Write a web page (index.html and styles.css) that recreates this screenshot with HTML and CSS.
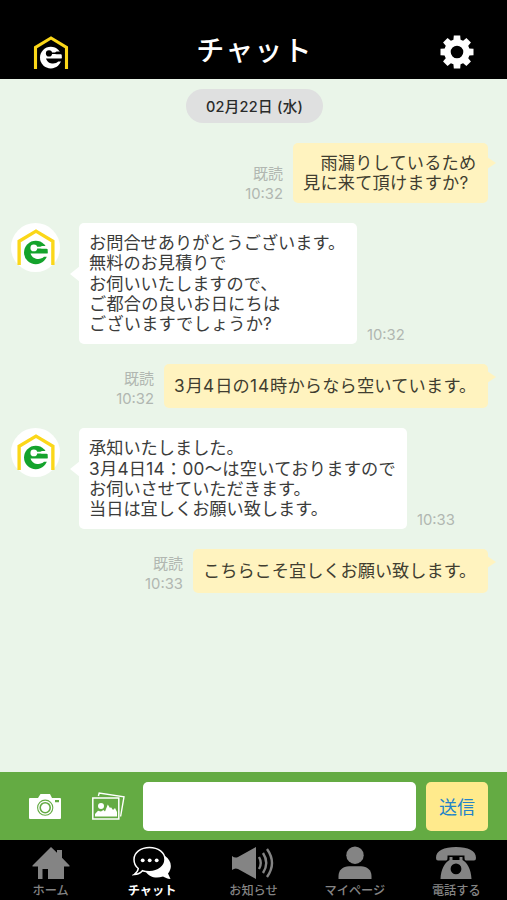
FILE: index.html
```html
<!DOCTYPE html>
<html lang="ja">
<head>
<meta charset="utf-8">
<title>チャット</title>
<link rel="stylesheet" href="styles.css">
</head>
<body>
<svg class="defs" aria-hidden="true">
  <mask id="letter-cut" maskUnits="userSpaceOnUse" x="0" y="0" width="36" height="34">
    <rect width="36" height="34" fill="#fff"/>
    <circle cx="16" cy="17.4" r="3.1" fill="#000"/>
    <path d="M16 16.4H22L23.5 15.6H31V18.2H23.5L22 18H16Z" fill="#000"/>
    <path d="M13 22.4H31V25.6H25.3C22.5 28.6 14.8 28.6 13 22.4Z" fill="#000"/>
  </mask>
  <symbol id="logo" viewBox="0 0 36 34">
    <path class="roof" d="M2.5 33V11.3L18 2L33.5 11.3V33"/>
    <g mask="url(#letter-cut)">
      <circle class="letter" cx="17.8" cy="21.6" r="10.8"/>
      <path class="letter" d="M18 18.4H28.6V22.4H18Z"/>
    </g>
  </symbol>
</svg>
<div class="app">
  <header class="header">
    <svg class="header-logo"><use href="#logo"/></svg>
    <h1 class="title">チャット</h1>
    <svg class="gear" viewBox="-17 -17 34 34">
      <g fill="#fff">
        <path fill-rule="evenodd" d="M0-12.8A12.8 12.8 0 1 0 0 12.8A12.8 12.8 0 1 0 0-12.8ZM0-6.3A6.3 6.3 0 1 1 0 6.3A6.3 6.3 0 1 1 0-6.3Z"/>
        <path id="tooth" d="M-3.6-11.5L-3.2-16.5H3.2L3.6-11.5Z"/>
        <use href="#tooth" transform="rotate(45)"/><use href="#tooth" transform="rotate(90)"/>
        <use href="#tooth" transform="rotate(135)"/><use href="#tooth" transform="rotate(180)"/>
        <use href="#tooth" transform="rotate(225)"/><use href="#tooth" transform="rotate(270)"/>
        <use href="#tooth" transform="rotate(315)"/>
      </g>
    </svg>
  </header>

  <main class="chat">
    <div class="date">02月22日 (水)</div>

    <div class="row sent">
      <div class="meta"><span class="read">既読</span><span>10:32</span></div>
      <div class="bubble w195 tail-mid"><p class="wide">　雨漏りしているため</p><p class="wide">見に来て頂けますか?</p></div>
    </div>

    <div class="row received">
      <div class="avatar"><svg><use href="#logo"/></svg></div>
      <div class="bubble w278 tail-low"><p>お問合せありがとうございます。</p><p>無料のお見積りで</p><p>お伺いいたしますので、</p><p class="wide">ご都合の良いお日にちは</p><p class="wide">ございますでしょうか?</p></div>
      <div class="meta">10:32</div>
    </div>

    <div class="row sent">
      <div class="meta"><span class="read">既読</span><span>10:32</span></div>
      <div class="bubble w324 single"><p class="wide"><span class="num">3</span>月<span class="num">4</span>日の<span class="num">14</span>時からなら空いています。</p></div>
    </div>

    <div class="row received">
      <div class="avatar"><svg><use href="#logo"/></svg></div>
      <div class="bubble w328"><p>承知いたしました。</p><p class="slot">3月4日14：00～は空いておりますので</p><p>お伺いさせていただきます。</p><p>当日は宜しくお願い致します。</p></div>
      <div class="meta">10:33</div>
    </div>

    <div class="row sent">
      <div class="meta"><span class="read">既読</span><span>10:33</span></div>
      <div class="bubble w295 single"><p>こちらこそ宜しくお願い致します。</p></div>
    </div>
  </main>

  <div class="composer">
    <svg class="camera" viewBox="0 0 32 25">
      <path fill="#fff" fill-rule="evenodd" d="M2 4H9L11.5 0H21L23 4H31Q32 4 32 5V24Q32 25 31 25H1Q0 25 0 24V5Q0 4 1 4ZM26 6V8.2H30V6Z"/>
      <circle cx="16.2" cy="13.7" r="7.6" fill="#fff" stroke="#64ab43" stroke-width="1.1"/>
      <circle cx="16.2" cy="13.7" r="5" fill="#fff" stroke="#64ab43" stroke-width="1.6"/>
    </svg>
    <svg class="photos" viewBox="0 0 33 28">
      <path d="M6.4 4L7.2 1L32 4.8L28.6 24.5" fill="none" stroke="#fff" stroke-width="1.4"/>
      <rect x=".8" y="6" width="26" height="21" fill="#64ab43" stroke="#fff" stroke-width="1.5"/>
      <path d="M3 24.5V22L6 18.8L9 19.5L11.5 18L13 19.5L15.8 12.6L18 16L19 15.2L21 18L23 16L25 20V24.5Z" fill="#fff"/>
      <circle cx="9" cy="14" r="3" fill="#fff"/>
    </svg>
    <input class="field" type="text" aria-label="メッセージ">
    <button class="send" type="button">送信</button>
  </div>

  <nav class="tabs">
    <a class="tab"><svg viewBox="0 0 40 34"><path d="M20 1L26 6.8V4H31V11.7L38.5 19.5V20.5H33V33H17V23H11.5V33H7V20.5H1.5V19.5Z"/></svg><span>ホーム</span></a>
    <a class="tab active"><svg viewBox="0 0 40 34"><path d="M33 10C39 14 41 21 36 27.5L38.5 33C35 32.8 33 31.6 31 30.5C24 33 17 31 14 26C25 26 33 19 33 10Z"/><path class="outline" d="M17.5 1.5C8.7 1.5 2 6.7 2 13.5C2 17.7 3.9 20.7 6.3 22.5C6 25 4.8 26.7 2.2 28.5C5.6 28.3 8.4 27 10.4 24.7C12.5 25.4 15 25.7 17.5 25.7C26.3 25.7 33 20.3 33 13.5C33 6.7 26.3 1.5 17.5 1.5Z"/><circle cx="10.7" cy="14.3" r="1.9"/><circle cx="17.7" cy="14.3" r="1.9"/><circle cx="24.7" cy="14.3" r="1.9"/></svg><span>チャット</span></a>
    <a class="tab"><svg class="speaker" viewBox="0 0 44 34"><path d="M1 10Q4 12.5 7 11L25 1V33L7 23Q4 21.5 1 24Z"/><path class="wave" d="M28 11Q31.5 17 28 23M32 7Q38.5 17 32 27M36 3Q46 17 36 31"/></svg><span>お知らせ</span></a>
    <a class="tab"><svg viewBox="0 0 40 34"><circle cx="20" cy="9.2" r="8.7"/><path d="M3.5 33V30C3.5 24 8 20.2 14 20.2H26C32 20.2 36.5 24 36.5 30V33Z"/></svg><span>マイページ</span></a>
    <a class="tab"><svg viewBox="0 0 40 34"><path d="M0 12C0 4.5 8 1 20 1S40 4.5 40 12Q40 14.5 38 14.5H30Q28.5 14.5 28.5 12V9.5H11.5V12Q11.5 14.5 10 14.5H2Q0 14.5 0 12Z"/><path fill-rule="evenodd" d="M13.5 11H16.5V14H23.5V11H26.5V14C31.5 17 35 23 35.5 33H4.5C5 23 8.5 17 13.5 14ZM20 17.5A5.4 5.4 0 1 0 20 28.3A5.4 5.4 0 1 0 20 17.5Z"/></svg><span>電話する</span></a>
  </nav>
</div>
</body>
</html>
```
FILE: styles.css
```css
* { box-sizing: border-box; }

body {
  margin: 0;
  font-family: Inter, "Noto Sans CJK JP", sans-serif;
}

.defs { display: block; width: 0; height: 0; }

.app {
  display: flex;
  flex-direction: column;
  width: 507px;
  height: 900px;
  background: #eaf5e9;
  overflow: hidden;
}

.header {
  display: grid;
  grid-template-columns: 36px 1fr 36px;
  align-items: center;
  height: 79px;
  padding: 22px 31px 0 33px;
  background: #000;
}

.header-logo { width: 36px; height: 34px; margin-top: 4px; color: #fff; }
.roof { fill: none; stroke: #fbd719; stroke-width: 3.1; }
.letter { fill: currentColor; }
.gear { width: 34px; height: 34px; margin-top: 3px; }

.title {
  margin: 0;
  color: #fff;
  font-size: 28px;
  font-weight: 500;
  line-height: 36px;
  letter-spacing: 1.2px;
  text-align: center;
}

.chat { flex: 1; padding: 10px 19px 0 11px; }

.date {
  width: 137px;
  height: 34px;
  margin: 0 0 20px 175px;
  border-radius: 17px;
  background: #dfe0e0;
  color: #292b2a;
  font-size: 14.5px;
  font-weight: 500;
  line-height: 35px;
  letter-spacing: .3px;
  text-align: center;
  white-space: nowrap;
}

.row { display: flex; align-items: flex-end; margin-bottom: 20px; }
.sent { justify-content: flex-end; }

.meta {
  display: flex;
  flex-direction: column;
  align-items: flex-end;
  margin: 0 10px -2px;
  color: #b1b7b1;
  font-size: 14.8px;
  line-height: 21px;
}
.read { font-size: 15px; }

.bubble {
  position: relative;
  padding: 10px 10px 9px;
  border-radius: 5px;
  background: #fff;
  color: #3b3c3b;
  font-size: 17.2px;
  line-height: 20.4px;
  white-space: nowrap;
}
.bubble p { margin: 0; }
.bubble .wide { letter-spacing: .2px; }
.slot { font-family: Inter, "Noto Sans CJK SC", sans-serif; letter-spacing: .3px; }
.num { letter-spacing: 1px; }
.sent .bubble { background: #fff3bf; color: #403d30; }

.bubble::after {
  content: "";
  position: absolute;
  top: 33px;
  left: -9px;
  border: 8px solid transparent;
  border-width: 8px 10px 8px 0;
  border-right-color: #fff;
}
.bubble.tail-low::after { top: 43px; }

.sent .bubble::after {
  top: 7px;
  left: auto;
  right: -8px;
  border-width: 6px 0 6px 9px;
  border-color: transparent transparent transparent #fff3bf;
}
.sent .tail-mid::after { top: 14px; }

.single { padding: 12.5px 10px 11.5px; }
.w195 { width: 195px; }
.w278 { width: 278px; }
.w295 { width: 295px; }
.w324 { width: 324px; }
.w328 { width: 328px; }

.avatar {
  display: flex;
  align-items: center;
  justify-content: center;
  align-self: flex-start;
  width: 49px;
  height: 49px;
  margin-right: 19px;
  border-radius: 50%;
  background: #fff;
  color: #14a32c;
}
.avatar svg { width: 40px; height: 37px; }

.composer {
  display: flex;
  align-items: center;
  height: 68px;
  padding: 0 19px 0 29px;
  background: #64ab43;
}
.camera { width: 32px; height: 25px; margin-right: 31px; }
.photos { width: 33px; height: 28px; margin-right: 18px; }
.field {
  width: 273px;
  height: 49px;
  margin-right: 10px;
  border: 0;
  border-radius: 5px;
  background: #fff;
}
.send {
  width: 62px;
  height: 49px;
  padding: 0;
  border: 0;
  border-radius: 5px;
  background: #ffea8c;
  color: #2383c9;
  font: 18px "Noto Sans CJK JP", sans-serif;
}

.tabs {
  display: grid;
  grid-template-columns: repeat(5, 1fr);
  height: 60px;
  padding-top: 6px;
  background: #000;
}
.tab {
  display: flex;
  flex-direction: column;
  align-items: center;
  color: #848484;
  font-size: 12.2px;
  font-weight: 500;
  line-height: 18px;
  white-space: nowrap;
}
.tab svg { width: 40px; height: 34px; margin-bottom: 2px; fill: currentColor; }
.tab .speaker { width: 44px; }
.active { color: #fff; font-weight: 700; }
.outline { fill: #000; stroke: #fff; stroke-width: 1.5; }
.wave { fill: none; stroke: currentColor; stroke-width: 2.4; }
```
